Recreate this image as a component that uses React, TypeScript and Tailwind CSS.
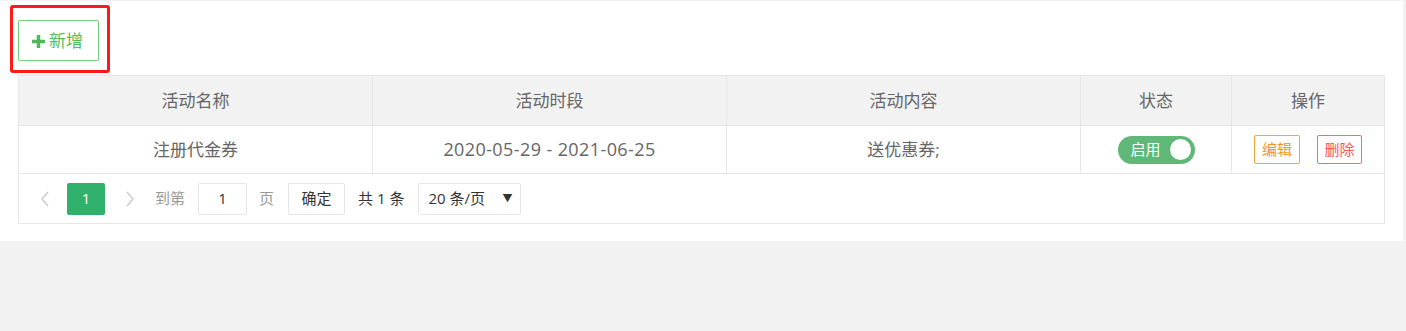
export default function App() {
  const cols = [
    { title: '活动名称', w: 'w-[354px]' },
    { title: '活动时段', w: 'w-[354px]' },
    { title: '活动内容', w: 'w-[354px]' },
    { title: '状态', w: 'w-[151px]' },
    { title: '操作', w: 'flex-1' },
  ]

  return (
    <div
      className="min-h-[331px] w-[1406px] bg-[#f2f2f2] pt-[1px] text-[17px] text-[#666]"
      style={{ fontFamily: '"Open Sans", "Noto Sans CJK SC", sans-serif' }}
    >
      <div className="h-[240px] w-[1403px] bg-white px-[18px] pt-[19px]">
        {/* Toolbar */}
        <div className="relative h-[41px]">
          <button className="flex h-[41px] w-[81px] items-center justify-center gap-[4px] rounded-[2px] border border-[#6fcf7f] bg-white pr-[2px] text-[17px] text-[#52bb60]">
            <svg width="13" height="13" viewBox="0 0 12 12" className="mt-[1px]">
              <path d="M4.4 0h3.2v4.4H12v3.2H7.6V12H4.4V7.6H0V4.4h4.4z" fill="#4cb85a" />
            </svg>
            新增
          </button>
          <div className="pointer-events-none absolute left-[-8px] top-[-15px] h-[68px] w-[100px] rounded-[3px] border-[3px] border-[#ff1a1a]" />
        </div>

        {/* Table */}
        <div className="mt-[14px] border border-[#e6e6e6]">
          <div className="flex h-[49px] bg-[#f2f2f2]">
            {cols.map((c, i) => (
              <div
                key={c.title}
                className={`${c.w} flex items-center justify-center ${i < cols.length - 1 ? 'border-r border-[#e6e6e6]' : ''}`}
              >
                {c.title}
              </div>
            ))}
          </div>
          <div className="flex h-[48px] border-t border-[#e6e6e6]">
            <div className="flex w-[354px] items-center justify-center border-r border-[#e6e6e6]">注册代金券</div>
            <div className="flex w-[354px] items-center justify-center border-r border-[#e6e6e6] text-[18px] tracking-[0.4px]">
              2020-05-29 - 2021-06-25
            </div>
            <div className="flex w-[354px] items-center justify-center border-r border-[#e6e6e6]">送优惠券;</div>
            <div className="flex w-[151px] items-center justify-center border-r border-[#e6e6e6]">
              <div className="flex h-[28px] w-[77px] items-center justify-between rounded-full bg-[#5fb878] pl-[13px] pr-[4px] text-[15px] text-white">
                启用
                <span className="h-[21px] w-[21px] rounded-full bg-white" />
              </div>
            </div>
            <div className="flex flex-1 items-center justify-center gap-[17px]">
              <button className="h-[29px] w-[46px] rounded-[2px] border border-[#f7a23a] bg-white text-[15px] text-[#f7931e]">
                编辑
              </button>
              <button className="h-[29px] w-[45px] rounded-[2px] border border-[#f66] bg-white text-[15px] text-[#f55]">
                删除
              </button>
            </div>
          </div>

          {/* Pagination */}
          <div className="flex h-[50px] items-center border-t border-[#e6e6e6] pl-[18px] text-[15px]">
            <svg width="10" height="16" viewBox="0 0 10 16" className="ml-[3px]">
              <path d="M8 1L2 8l6 7" fill="none" stroke="#c8c8c8" strokeWidth="1.3" />
            </svg>
            <div className="ml-[17px] flex h-[32px] w-[38px] items-center justify-center rounded-[2px] bg-[#2fb06b] text-white">
              1
            </div>
            <svg width="10" height="16" viewBox="0 0 10 16" className="ml-[20px]">
              <path d="M2 1l6 7-6 7" fill="none" stroke="#c8c8c8" strokeWidth="1.3" />
            </svg>
            <span className="ml-[20px] text-[#999]">到第</span>
            <div className="ml-[13px] flex h-[32px] w-[49px] items-center justify-center rounded-[2px] border border-[#e6e6e6] text-[#333]">
              1
            </div>
            <span className="ml-[12px] text-[#999]">页</span>
            <div className="ml-[14px] flex h-[32px] w-[57px] items-center justify-center rounded-[2px] border border-[#e6e6e6] text-[#333]">
              确定
            </div>
            <span className="ml-[13px] text-[#333]">共 1 条</span>
            <div className="ml-[14px] flex h-[32px] w-[103px] items-center justify-between rounded-[2px] border border-[#e6e6e6] pl-[9px] pr-[8px] text-[#333]">
              <span>20 条/页</span>
              <span className="text-[10px]">▼</span>
            </div>
          </div>
        </div>
      </div>
    </div>
  )
}
